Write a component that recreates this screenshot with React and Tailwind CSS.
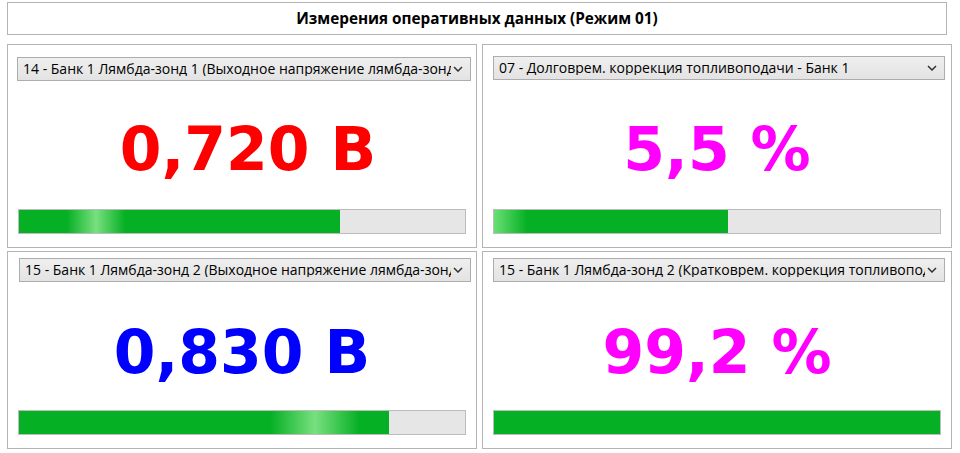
import React from "react";

function Chevron() {
  return (
    <svg width="10" height="6" viewBox="0 0 10 6" className="shrink-0 ml-[2px]">
      <path d="M1 1 L5 5 L9 1" fill="none" stroke="#333" strokeWidth="1.5" />
    </svg>
  );
}

function Select({ text, w }) {
  return (
    <div
      className={`${w} h-[24px] flex items-center justify-between pl-[5px] pr-[7px] border border-[#adadad] bg-[linear-gradient(#efefef,#e3e3e3)] text-[14px] text-black leading-none overflow-hidden whitespace-nowrap`}
      style={{ fontFamily: '"Open Sans", "Noto Sans", sans-serif' }}
    >
      <span className="min-w-0 overflow-hidden whitespace-nowrap">{text}</span>
      <Chevron />
    </div>
  );
}

function Bar({ pct, fill }) {
  return (
    <div className="w-[448px] h-[25px] border border-[#bcbcbc] bg-[#e6e6e6] flex">
      <div className={`h-full ${fill}`} style={{ width: pct + "%" }} />
    </div>
  );
}

function Panel({ select, selW, value, color, pct, fill, h, pt, valueH, ml }) {
  return (
    <div className={`${h} border border-[#b4b4b4] flex flex-col ${pt}`}>
      <div className={ml}>
        <Select text={select} w={selW} />
      </div>
      <div
        className={`${valueH} flex items-center justify-center font-bold text-[60px] leading-none whitespace-nowrap ${color}`}
        style={{ fontFamily: '"DejaVu Sans", Verdana, sans-serif' }}
      >
        {value}
      </div>
      <div className="ml-[10px]">
        <Bar pct={pct} fill={fill} />
      </div>
    </div>
  );
}

export default function App() {
  return (
    <div className="w-[960px] h-[453px] bg-white pl-[7px] pt-[2px] overflow-hidden">
      <div
        className="w-[940px] h-[33px] border border-[#b4b4b4] flex items-center justify-center font-bold text-[15.3px] text-black"
        style={{ fontFamily: '"Open Sans", "Noto Sans", sans-serif' }}
      >
        Измерения оперативных данных (Режим 01)
      </div>
      <div className="mt-[9px] grid grid-cols-[470px_470px] gap-x-[5px] gap-y-[3px]">
        <Panel
          h="h-[204px]"
          pt="pt-[12px]"
          ml="ml-[9px]"
          selW="w-[454px]"
          valueH="h-[128px] pt-[8px] pl-[12px]"
          select="14 - Банк 1 Лямбда-зонд 1 (Выходное напряжение лямбда-зонда)"
          value="0,720 В"
          color="text-[#ff0000]"
          pct={72}
          fill="bg-[linear-gradient(90deg,#06b025_0%,#06b025_15%,#78e080_24%,#06b025_33%,#06b025_100%)]"
        />
        <Panel
          h="h-[204px]"
          pt="pt-[11px]"
          ml="ml-[10px]"
          selW="w-[452px]"
          valueH="h-[129px] pt-[8px]"
          select="07 - Долговрем. коррекция топливоподачи - Банк 1"
          value="5,5 %"
          color="text-[#ff00ff]"
          pct={52.5}
          fill="bg-[linear-gradient(90deg,#6ae075_0%,#06b025_14%,#06b025_100%)]"
        />
        <Panel
          h="h-[198px]"
          pt="pt-[6px]"
          ml="ml-[11px]"
          selW="w-[452px]"
          valueH="h-[128px] pt-[12px]"
          select="15 - Банк 1 Лямбда-зонд 2 (Выходное напряжение лямбда-зонда)"
          value="0,830 В"
          color="text-[#0000ff]"
          pct={83}
          fill="bg-[linear-gradient(90deg,#06b025_0%,#06b025_68%,#78e080_80%,#06b025_92%,#06b025_100%)]"
        />
        <Panel
          h="h-[198px]"
          pt="pt-[6px]"
          ml="ml-[10px]"
          selW="w-[452px]"
          valueH="h-[128px] pt-[12px]"
          select="15 - Банк 1 Лямбда-зонд 2 (Кратковрем. коррекция топливоподачи)"
          value="99,2 %"
          color="text-[#ff00ff]"
          pct={100}
          fill="bg-[#06b025]"
        />
      </div>
    </div>
  );
}
